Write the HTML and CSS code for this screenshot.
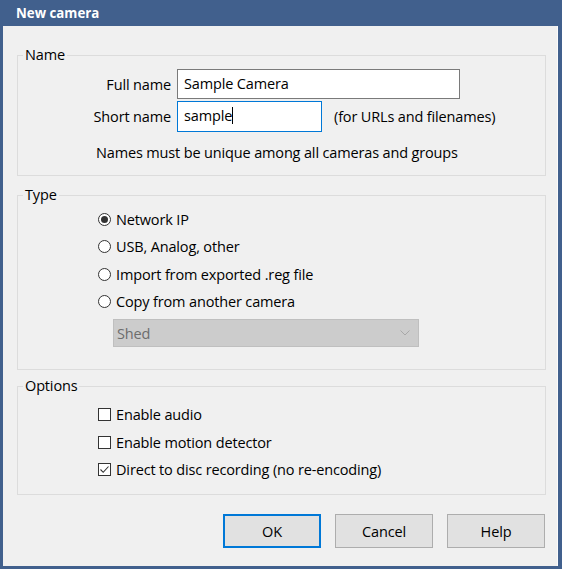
FILE: index.html
```html
<!DOCTYPE html>
<html>
<head>
<meta charset="utf-8">
<link rel="stylesheet" href="styles.css">
</head>
<body>
<div class="window">
  <div class="titlebar">New camera</div>
  <div class="client">
    <fieldset class="group group-name">
      <legend>Name</legend>
      <div class="name-grid">
        <label class="lbl">Full name</label>
        <div class="input input-full">Sample Camera</div>
        <label class="lbl">Short name</label>
        <div class="input input-short focused">sample<span class="caret"></span></div>
        <span class="hint">(for URLs and filenames)</span>
      </div>
      <p class="note">Names must be unique among all cameras and groups</p>
    </fieldset>

    <fieldset class="group group-type">
      <legend>Type</legend>
      <div class="opt"><span class="radio checked"></span>Network IP</div>
      <div class="opt"><span class="radio"></span>USB, Analog, other</div>
      <div class="opt"><span class="radio"></span>Import from exported .reg file</div>
      <div class="opt"><span class="radio"></span>Copy from another camera</div>
      <div class="select">
        <span>Shed</span>
        <svg class="chev" width="10" height="6" viewBox="0 0 10 6"><path d="M0.5 0.5 L5 5 L9.5 0.5" fill="none" stroke="#a8a8a8" stroke-width="1"/></svg>
      </div>
    </fieldset>

    <fieldset class="group group-options">
      <legend>Options</legend>
      <div class="opt"><span class="check"></span>Enable audio</div>
      <div class="opt"><span class="check"></span>Enable motion detector</div>
      <div class="opt"><span class="check checked"><svg width="11" height="11" viewBox="0 0 11 11"><path d="M1.5 5.5 L4.2 8.3 L9.5 2.5" fill="none" stroke="#333" stroke-width="1.1"/></svg></span>Direct to disc recording (no re-encoding)</div>
    </fieldset>

    <div class="buttons">
      <button class="btn default">OK</button>
      <button class="btn">Cancel</button>
      <button class="btn">Help</button>
    </div>
  </div>
</div>
</body>
</html>
```

FILE: styles.css
```css
html, body {
  margin: 0;
  padding: 0;
}
body {
  font-family: "Open Sans", "Noto Sans", sans-serif;
  font-size: 14.5px;
  letter-spacing: -0.15px;
  color: #000;
}
.window {
  width: 562px;
  height: 569px;
  box-sizing: border-box;
  background: #41608d;
  padding: 0 4px 3px 3px;
  display: flex;
  flex-direction: column;
}
.titlebar {
  height: 26px;
  flex: none;
  color: #fff;
  font-weight: bold;
  font-size: 13.3px;
  letter-spacing: 0;
  line-height: 27px;
  padding-left: 13px;
}
.client {
  flex: 1;
  background: #f0f0f0;
  padding: 19px 12px 0 14px;
  box-shadow: inset -1px 0 0 #fbfbfb;
}
.group {
  margin: 0;
  padding: 0;
  border: 1px solid #dcdcdc;
  min-width: 0;
}
.group legend {
  margin-left: 5px;
  padding: 0 2px;
  line-height: 20px;
  height: 20px;
}
.group-name {
  padding: 4px 0 12px 0;
}
.name-grid {
  display: grid;
  grid-template-columns: 153px 145px 1fr;
  column-gap: 6px;
  row-gap: 2px;
  align-items: center;
}
.lbl {
  text-align: right;
}
.input {
  box-sizing: border-box;
  height: 30px;
  background: #fff;
  border: 1px solid #7a7a7a;
  padding-left: 6px;
  line-height: 27px;
  white-space: nowrap;
}
.input-full {
  grid-column: 2 / 4;
  width: 283px;
}
.input-short {
  width: 145px;
  height: 31px;
}
.focused {
  border-color: #0078d7;
}
.caret {
  display: inline-block;
  width: 1px;
  height: 17px;
  background: #000;
  vertical-align: -3px;
}
.hint {
  margin-left: 6px;
}
.note {
  margin: 11px 0 0 78px;
  line-height: 20px;
}
.group-type {
  margin-top: 9px;
  padding: 1px 0 22px 0;
}
.opt {
  display: flex;
  align-items: center;
  height: 27.3px;
  margin-left: 80px;
}
.radio {
  box-sizing: border-box;
  width: 13px;
  height: 13px;
  border: 1px solid #333;
  border-radius: 50%;
  margin-right: 5px;
  display: flex;
  align-items: center;
  justify-content: center;
  background: #fff;
}
.radio.checked::after {
  content: "";
  width: 7px;
  height: 7px;
  border-radius: 50%;
  background: #333;
}
.check {
  box-sizing: border-box;
  width: 13px;
  height: 13px;
  border: 1px solid #333;
  margin-right: 5px;
  background: #fff;
  display: flex;
  align-items: center;
  justify-content: center;
}
.check svg {
  display: block;
}
.select {
  box-sizing: border-box;
  margin: 4px 0 0 95px;
  width: 306px;
  height: 28px;
  background: #cccccc;
  border: 1px solid #bfbfbf;
  color: #6d6d6d;
  display: flex;
  align-items: center;
  justify-content: space-between;
  padding: 0 8px 0 3px;
}
.group-options {
  margin-top: 6px;
  padding: 5px 0 11px 0;
}
.buttons {
  display: flex;
  justify-content: flex-end;
  gap: 14px;
  margin-top: 19px;
  padding-right: 1px;
}
.btn {
  box-sizing: border-box;
  width: 98px;
  height: 34px;
  font-family: inherit;
  font-size: 14.5px;
  letter-spacing: -0.15px;
  color: #000;
  background: #e1e1e1;
  border: 1px solid #adadad;
  padding: 0;
  border-radius: 0;
}
.btn.default {
  border: 2px solid #0078d7;
}
```
